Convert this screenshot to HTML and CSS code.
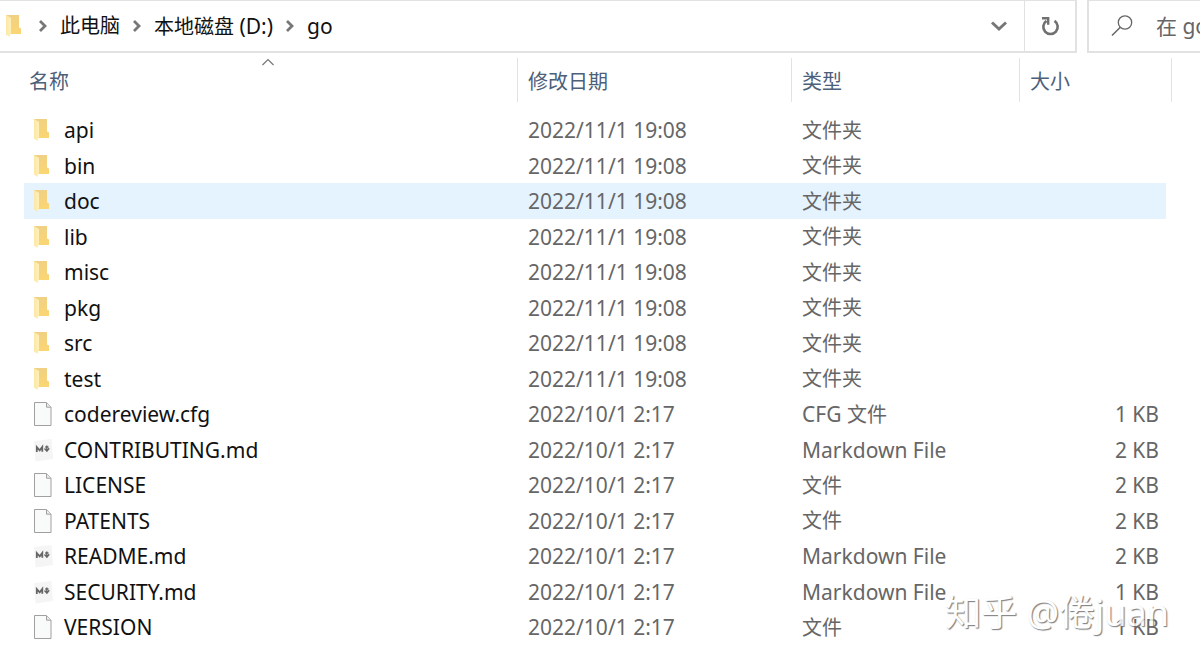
FILE: index.html
```html
<!DOCTYPE html>
<html lang="zh-CN">
<head>
<meta charset="utf-8">
<title>go</title>
<link rel="stylesheet" href="styles.css">
</head>
<body>
<svg class="defs" aria-hidden="true">
  <defs>
    <linearGradient id="front" x1="0" y1="0" x2="1" y2="0"><stop offset="0" stop-color="#fbe7a6"/><stop offset="1" stop-color="#fff0b8"/></linearGradient>
    <linearGradient id="back" x1="0" y1="0" x2="0" y2="1"><stop offset="0" stop-color="#f0d084"/><stop offset="1" stop-color="#fbd673"/></linearGradient>
  </defs>
  <symbol id="folder" viewBox="0 0 20 24">
    <path d="M1 1h13v12.500l2 1V20H4z" fill="url(#back)"/>
    <path d="M1 1l5 3V18.500L4.500 23 1 20.500z" fill="url(#front)"/>
  </symbol>
  <symbol id="file" viewBox="0 0 20 24">
    <path d="M1.500.5h12l4.500 4.700v18.300H1.500z" fill="#f9fafa" stroke="#a0a0a0"/>
    <path d="M13.500.8v4.400h4.500" fill="#e9ebec" stroke="#a0a0a0"/>
  </symbol>
  <symbol id="markdown" viewBox="0 0 20 24">
    <path d="M1 3L18.500 1 20 21 2.500 23.500z" fill="#f5f5f5"/>
    <path d="M3.800 14V9.200l2.900 3.200L9.300 9v4.800" fill="none" stroke="#666" stroke-width="1.800"/>
    <path d="M13.800 7.500v5.500M11.500 10.500l2.400 2.700 2.300-3M12.200 9h3.300" fill="none" stroke="#666" stroke-width="1.400"/>
  </symbol>
  <symbol id="chevron" viewBox="0 0 10 14"><path d="M2 2l5 5-5 5" fill="none" stroke="#777" stroke-width="2.800"/></symbol>
</svg>
<header class="toolbar">
  <nav class="address" aria-label="路径">
    <svg class="icon"><use href="#folder"/></svg>
    <svg class="chevron"><use href="#chevron"/></svg>
    <button class="crumb cjk" type="button">此电脑</button>
    <svg class="chevron"><use href="#chevron"/></svg>
    <button class="crumb" type="button"><span class="cjk">本地磁盘</span> (D:)</button>
    <svg class="chevron"><use href="#chevron"/></svg>
    <button class="crumb" type="button">go</button>
    <button class="history" type="button" aria-label="以前的位置"><svg width="18" height="14" viewBox="0 0 18 14"><path d="M2 3.500l7 6.500 7-6.500" fill="none" stroke="#777" stroke-width="3"/></svg></button>
  </nav>
  <button class="refresh" type="button" aria-label="刷新"><svg width="20" height="22" viewBox="0 0 20 22"><path d="M14.500 5.800A7.200 7.200 0 1 1 6.500 5.800" fill="none" stroke="#707070" stroke-width="2.600"/><path d="M2 3.300h6.200v6.500" fill="none" stroke="#707070" stroke-width="2.400"/></svg></button>
  <label class="search">
    <svg width="24" height="24" viewBox="0 0 24 24"><circle cx="15" cy="8.500" r="6.700" fill="none" stroke="#666" stroke-width="1.300"/><path d="M10.300 13.200L2 21.500" stroke="#666" stroke-width="1.500"/></svg>
    <input class="search-input" type="text" aria-label="搜索" placeholder="在 go 中搜索">
  </label>
</header>
<main class="listing">
  <table class="files">
    <colgroup><col><col class="col-date"><col class="col-type"><col class="col-size"></colgroup>
    <thead>
      <tr>
        <th><button class="sort" type="button">名称</button><svg class="sort-mark" width="14" height="8" viewBox="0 0 14 8"><path d="M1.500 7L7 1.500 12.500 7" fill="none" stroke="#777" stroke-width="1.200"/></svg></th>
        <th><button class="sort" type="button">修改日期</button></th>
        <th><button class="sort" type="button">类型</button></th>
        <th class="last"><button class="sort" type="button">大小</button></th>
      </tr>
    </thead>
    <tbody>
      <tr><td><div class="name"><svg class="icon"><use href="#folder"/></svg>api</div></td><td>2022/11/1 19:08</td><td><span class="cjk">文件夹</span></td><td></td></tr>
      <tr><td><div class="name"><svg class="icon"><use href="#folder"/></svg>bin</div></td><td>2022/11/1 19:08</td><td><span class="cjk">文件夹</span></td><td></td></tr>
      <tr class="hovered"><td><div class="name"><svg class="icon"><use href="#folder"/></svg>doc</div></td><td>2022/11/1 19:08</td><td><span class="cjk">文件夹</span></td><td></td></tr>
      <tr><td><div class="name"><svg class="icon"><use href="#folder"/></svg>lib</div></td><td>2022/11/1 19:08</td><td><span class="cjk">文件夹</span></td><td></td></tr>
      <tr><td><div class="name"><svg class="icon"><use href="#folder"/></svg>misc</div></td><td>2022/11/1 19:08</td><td><span class="cjk">文件夹</span></td><td></td></tr>
      <tr><td><div class="name"><svg class="icon"><use href="#folder"/></svg>pkg</div></td><td>2022/11/1 19:08</td><td><span class="cjk">文件夹</span></td><td></td></tr>
      <tr><td><div class="name"><svg class="icon"><use href="#folder"/></svg>src</div></td><td>2022/11/1 19:08</td><td><span class="cjk">文件夹</span></td><td></td></tr>
      <tr><td><div class="name"><svg class="icon"><use href="#folder"/></svg>test</div></td><td>2022/11/1 19:08</td><td><span class="cjk">文件夹</span></td><td></td></tr>
      <tr><td><div class="name"><svg class="icon"><use href="#file"/></svg>codereview.cfg</div></td><td>2022/10/1 2:17</td><td>CFG <span class="cjk">文件</span></td><td>1 KB</td></tr>
      <tr><td><div class="name"><svg class="icon"><use href="#markdown"/></svg>CONTRIBUTING.md</div></td><td>2022/10/1 2:17</td><td>Markdown File</td><td>2 KB</td></tr>
      <tr><td><div class="name"><svg class="icon"><use href="#file"/></svg>LICENSE</div></td><td>2022/10/1 2:17</td><td><span class="cjk">文件</span></td><td>2 KB</td></tr>
      <tr><td><div class="name"><svg class="icon"><use href="#file"/></svg>PATENTS</div></td><td>2022/10/1 2:17</td><td><span class="cjk">文件</span></td><td>2 KB</td></tr>
      <tr><td><div class="name"><svg class="icon"><use href="#markdown"/></svg>README.md</div></td><td>2022/10/1 2:17</td><td>Markdown File</td><td>2 KB</td></tr>
      <tr><td><div class="name"><svg class="icon"><use href="#markdown"/></svg>SECURITY.md</div></td><td>2022/10/1 2:17</td><td>Markdown File</td><td>1 KB</td></tr>
      <tr><td><div class="name"><svg class="icon"><use href="#file"/></svg>VERSION</div></td><td>2022/10/1 2:17</td><td><span class="cjk">文件</span></td><td>1 KB</td></tr>
    </tbody>
  </table>
  <div class="watermark">知乎 @倦juan</div>
</main>
</body>
</html>
```
FILE: styles.css
```css
* { box-sizing: border-box; }

body {
  margin: 0;
  background: #fff;
  color: #111;
  font: 21px/28px "Noto Sans", "Noto Sans CJK SC", sans-serif;
}

button, input {
  font: inherit;
  color: inherit;
  background: none;
  border: 0;
  padding: 0;
}

.cjk { font-size: 20px; }

.defs { position: absolute; width: 0; height: 0; }

.toolbar {
  display: flex;
  height: 53px;
}

.address {
  flex: 1;
  display: flex;
  align-items: center;
  padding-left: 5px;
  border: solid #e2e2e2;
  border-width: 1px 0 2px;
}

.icon { flex: none; width: 20px; height: 24px; }

.chevron { flex: none; width: 10px; height: 14px; margin: 0 12px; }
.icon + .chevron { margin-left: 13px; }

.crumb { white-space: pre; }

.history {
  display: flex;
  margin-left: auto;
  padding: 8px 16px;
}

.refresh {
  width: 53px;
  display: flex;
  align-items: center;
  justify-content: center;
  border: solid #e2e2e2;
  border-width: 1px 2px 2px 1px;
}

.search {
  width: 113px;
  margin-left: 10px;
  display: flex;
  align-items: center;
  gap: 22px;
  padding-left: 21px;
  border: solid #e2e2e2;
  border-width: 1px 0 2px 2px;
  color: #666;
}

.search svg { flex: none; }
.search-input { flex: 1; min-width: 0; }
.search-input::placeholder { color: #666; opacity: 1; }

.listing {
  position: relative;
  padding: 0 34px 0 24px;
}

.files {
  width: 100%;
  table-layout: fixed;
  border-collapse: collapse;
}

.col-date { width: 274px; }
.col-type { width: 228px; }
.col-size { width: 146px; }

th {
  position: relative;
  height: 59px;
  padding: 0 0 2px 10px;
  text-align: left;
  font-size: 20px;
  font-weight: 400;
  color: #4c607a;
}

th:first-child { padding-left: 5px; }

th::before, .last::after {
  content: "";
  position: absolute;
  top: 5px;
  left: -1px;
  width: 1px;
  height: 44px;
  background: #e2e2e2;
}

th:first-child::before { display: none; }
.last::after { left: auto; right: -6px; }

.sort-mark {
  position: absolute;
  top: 5px;
  left: calc(50% - 10px);
}

td {
  height: 36px;
  padding: 0 0 0 10px;
  line-height: 28px;
  color: #666;
}

tr:nth-child(even) td { height: 35px; }

td:first-child { padding-left: 9px; color: #111; }
td:last-child { padding-right: 7px; text-align: right; }

.name { display: flex; align-items: center; gap: 11px; }

.hovered { background: #e5f3ff; }

.watermark {
  position: absolute;
  right: 31px;
  bottom: 12px;
  font-size: 36px;
  line-height: 40px;
  color: #fff;
  opacity: 0.8;
  text-shadow: 1px 1px 1px #666, 1px 1px 1px #aaa;
}
```
